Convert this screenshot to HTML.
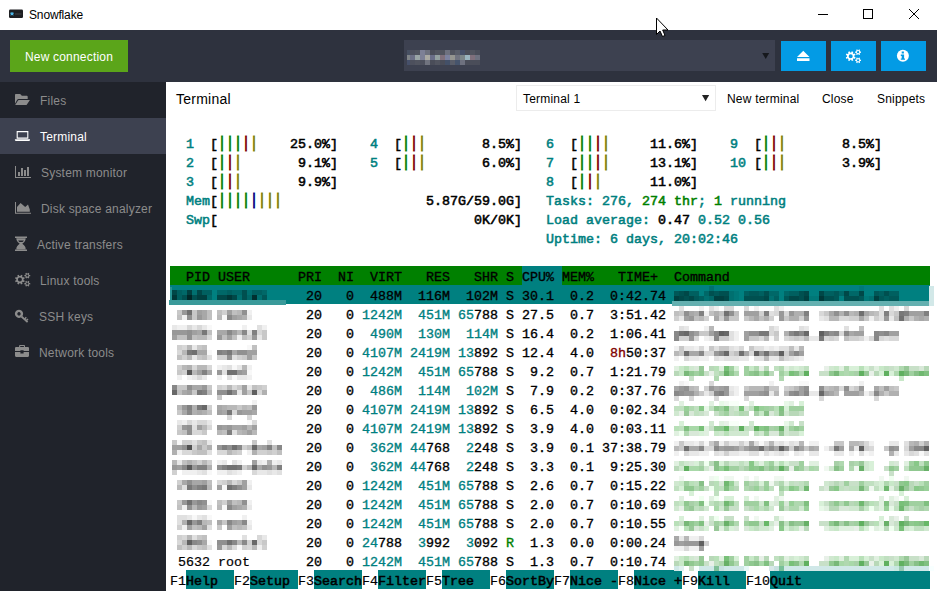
<!DOCTYPE html>
<html><head><meta charset="utf-8"><title>Snowflake</title>
<style>
html,body{margin:0;padding:0;}
body{width:937px;height:591px;overflow:hidden;background:#fff;position:relative;font-family:"Liberation Sans",sans-serif;font-size:12px;color:#000;}
.abs{position:absolute;}
.t{position:absolute;white-space:pre;font:normal 13.33px/19px "Liberation Mono",monospace;-webkit-text-stroke:0.35px currentColor;height:19px;}
.h{-webkit-text-stroke-width:0.55px;}
.l{-webkit-text-stroke-width:0.2px;}
.bar{-webkit-text-stroke-width:0.7px;transform:scaleY(1.18);transform-origin:50% 77%;}
.b{position:absolute;}
#titlebar{position:absolute;left:0;top:0;width:937px;height:30px;background:#fff;}
#toolbar{position:absolute;left:0;top:30px;width:937px;height:52px;background:#2e323e;}
#sidebar{position:absolute;left:0;top:82px;width:166px;height:509px;background:#20232b;}
.item{position:absolute;left:0;width:166px;height:36px;line-height:36px;color:#8c8c8c;font-size:12px;white-space:nowrap;}
.item.sel{background:#3d4150;color:#fff;}
.item svg{position:absolute;}
.item span{position:absolute;top:1px;letter-spacing:0.2px;}
.lbl{position:absolute;white-space:nowrap;}
</style></head><body>
<div id="titlebar">
<svg class="abs" style="left:9px;top:10px" width="14" height="10" viewBox="0 0 14 10" overflow="visible"><rect x="0" y="-0.400" width="14" height="8.400" rx="1.2" fill="#1e1f22"/><path d="M1.200 3.800H4.800M2 2.200L4 5.400M4 2.200L2 5.400" stroke="#4fc3f7" stroke-width="1" fill="none"/><rect x="6" y="3" width="6.500" height="2" fill="#2f3134"/></svg>
<div class="lbl" style="left:29px;top:7px;font-size:12px;line-height:16px;letter-spacing:-0.15px;">Snowflake</div>
<svg class="abs" style="left:810px;top:0" width="127" height="30" viewBox="0 0 127 30" fill="none" stroke="#000" stroke-width="1"><path d="M8 14.5H18"/><rect x="53.5" y="9.5" width="9" height="9"/><path d="M99 9L109 19M109 9L99 19"/></svg>
</div>
<div id="toolbar">
<div class="abs" style="left:10px;top:10px;width:118px;height:32px;background:#5ba51a;color:#fff;font-size:12px;line-height:34px;text-align:center;letter-spacing:0.2px;">New connection</div>
<div class="abs" style="left:404px;top:10px;width:371px;height:31px;background:#3d4150;"></div>
<svg class="abs" style="left:761px;top:22px" width="10" height="8" viewBox="0 0 10 8"><path d="M1.2 1H8.200L4.700 7Z" fill="#16181d"/></svg>
<div class="abs" style="left:781px;top:11px;width:45px;height:30px;background:#039be5;"></div>
<div class="abs" style="left:831px;top:11px;width:45px;height:30px;background:#039be5;"></div>
<div class="abs" style="left:881px;top:11px;width:45px;height:30px;background:#039be5;"></div>
<svg class="abs" style="left:781px;top:11px" width="145" height="30" viewBox="0 0 145 30">
<path fill="#fff" d="M16 16H28.5L22.25 9.8ZM16 17.3H28.5V20H16Z"/>
<path fill="#fff" fill-rule="evenodd" d="M74.58 16.29L73.92 17.88L72.69 17.37L71.87 18.19L72.38 19.42L70.79 20.08L70.28 18.85L69.12 18.85L68.61 20.08L67.02 19.42L67.53 18.19L66.71 17.37L65.48 17.88L64.82 16.29L66.05 15.78L66.05 14.62L64.82 14.11L65.48 12.52L66.71 13.03L67.53 12.21L67.02 10.98L68.61 10.32L69.12 11.55L70.28 11.55L70.79 10.32L72.38 10.98L71.87 12.21L72.69 13.03L73.92 12.52L74.58 14.11L73.35 14.62L73.35 15.78ZM71.70 15.20A2.0 2.0 0 1 0 67.70 15.20A2.0 2.0 0 1 0 71.70 15.20ZM80.02 10.51L80.02 11.89L79.10 11.85L78.66 12.61L79.15 13.39L77.97 14.07L77.54 13.25L76.66 13.25L76.23 14.07L75.05 13.39L75.54 12.61L75.10 11.85L74.18 11.89L74.18 10.51L75.10 10.55L75.54 9.79L75.05 9.01L76.23 8.33L76.66 9.15L77.54 9.15L77.97 8.33L79.15 9.01L78.66 9.79L79.10 10.55ZM78.20 11.20A1.1 1.1 0 1 0 76.00 11.20A1.1 1.1 0 1 0 78.20 11.20ZM80.02 18.61L80.02 19.99L79.10 19.95L78.66 20.71L79.15 21.49L77.97 22.17L77.54 21.35L76.66 21.35L76.23 22.17L75.05 21.49L75.54 20.71L75.10 19.95L74.18 19.99L74.18 18.61L75.10 18.65L75.54 17.89L75.05 17.11L76.23 16.43L76.66 17.25L77.54 17.25L77.97 16.43L79.15 17.11L78.66 17.89L79.10 18.65ZM78.20 19.30A1.1 1.1 0 1 0 76.00 19.30A1.1 1.1 0 1 0 78.20 19.30Z"/>
<circle cx="121.9" cy="14.8" r="6" fill="#fff"/><path fill="#039be5" d="M120.7 10.6h2.2v2h-2.2zM120.2 13.5h2.9v3.9h.9v1.4h-4.2v-1.4h.9v-2.5h-.9v-1.4z"/>
</svg>
</div>
<div class="lbl" style="left:176px;top:90px;font-size:14px;line-height:18px;letter-spacing:0.25px;">Terminal</div>
<div class="abs" style="left:516px;top:85px;width:198px;height:24px;border:1px solid #ececec;box-sizing:content-box;"></div>
<div class="lbl" style="left:523px;top:91px;line-height:16px;letter-spacing:0.2px;">Terminal 1</div>
<svg class="abs" style="left:700px;top:94px" width="10" height="8" viewBox="0 0 10 8"><path d="M2 1H9.200L5.600 7.200Z" fill="#222"/></svg>
<div class="lbl" style="left:727px;top:91px;line-height:16px;letter-spacing:0.2px;">New terminal</div>
<div class="lbl" style="left:822px;top:91px;line-height:16px;letter-spacing:0.2px;">Close</div>
<div class="lbl" style="left:877px;top:91px;line-height:16px;letter-spacing:0.2px;">Snippets</div>

<div id="sidebar">
<div class="item" style="top:0px"><svg style="left:0;top:0" width="36" height="36" viewBox="0 0 36 36" fill="#8c8c8c"><path d="M15 12.800q0-.8.800-.8h4q.6 0 1 .5l1 1.300h5q.9 0 .9.900v2.200H18.600q-.9 0-1.400.800L15 21.700zM18.900 17.900H29.900l-3 4.600q-.3.500-1 .500H15.200l2.800-4.500q.3-.6.900-.6z"/></svg><span style="left:40px">Files</span></div>
<div class="item sel" style="top:36px"><svg style="left:0;top:0" width="36" height="36" viewBox="0 0 36 36" fill="#fff"><path fill="none" stroke="#fff" stroke-width="1.100" d="M17.200 13.600H27.800V20.100H17.200z"/><path d="M14.900 21.200H30v.9q0 .8-.8.800H15.700q-.8 0-.8-.8z"/></svg><span style="left:40px">Terminal</span></div>
<div class="item" style="top:72px"><svg style="left:0;top:0" width="36" height="36" viewBox="0 0 36 36" fill="#8c8c8c"><path d="M15 12h1v11h15v1H15zM18 18h2v4h-2zM21 14h2v8h-2zM24 16h2v6h-2zM27 13h2v9h-2z"/></svg><span style="left:41px">System monitor</span></div>
<div class="item" style="top:108px"><svg style="left:0;top:0" width="36" height="36" viewBox="0 0 36 36" fill="#8c8c8c"><path d="M15 12h1v10.700h15v1H15zM17 21.700V17l3.600-4 4.600 4.100 2.800-2.500 1.800 5v2.100z"/></svg><span style="left:41px">Disk space analyzer</span></div>
<div class="item" style="top:144px"><svg style="left:0;top:0" width="36" height="36" viewBox="0 0 36 36" fill="#8c8c8c"><path fill-rule="evenodd" d="M15 10.600H27V12H15zM15 23.500H27V25H15zM16.300 12.300h9.400q0 3.300-3.400 5.450 3.400 2.150 3.400 5.450H16.300q0-3.300 3.400-5.450Q16.300 15.600 16.300 12.300zM18.100 14.600q.5.800 1.300 1.400h3.200q.8-.6 1.300-1.400z"/></svg><span style="left:37px">Active transfers</span></div>
<div class="item" style="top:180px"><svg style="left:0;top:0" width="36" height="36" viewBox="0 0 36 36" fill="#8c8c8c"><path fill="#8c8c8c" fill-rule="evenodd" d="M24.78 18.69L24.12 20.28L22.89 19.77L22.07 20.59L22.58 21.82L20.99 22.48L20.48 21.25L19.32 21.25L18.81 22.48L17.22 21.82L17.73 20.59L16.91 19.77L15.68 20.28L15.02 18.69L16.25 18.18L16.25 17.02L15.02 16.51L15.68 14.92L16.91 15.43L17.73 14.61L17.22 13.38L18.81 12.72L19.32 13.95L20.48 13.95L20.99 12.72L22.58 13.38L22.07 14.61L22.89 15.43L24.12 14.92L24.78 16.51L23.55 17.02L23.55 18.18ZM21.90 17.60A2.0 2.0 0 1 0 17.90 17.60A2.0 2.0 0 1 0 21.90 17.60ZM30.22 12.91L30.22 14.29L29.30 14.25L28.86 15.01L29.35 15.79L28.17 16.47L27.74 15.65L26.86 15.65L26.43 16.47L25.25 15.79L25.74 15.01L25.30 14.25L24.38 14.29L24.38 12.91L25.30 12.95L25.74 12.19L25.25 11.41L26.43 10.73L26.86 11.55L27.74 11.55L28.17 10.73L29.35 11.41L28.86 12.19L29.30 12.95ZM28.40 13.60A1.1 1.1 0 1 0 26.20 13.60A1.1 1.1 0 1 0 28.40 13.60ZM30.22 21.01L30.22 22.39L29.30 22.35L28.86 23.11L29.35 23.89L28.17 24.57L27.74 23.75L26.86 23.75L26.43 24.57L25.25 23.89L25.74 23.11L25.30 22.35L24.38 22.39L24.38 21.01L25.30 21.05L25.74 20.29L25.25 19.51L26.43 18.83L26.86 19.65L27.74 19.65L28.17 18.83L29.35 19.51L28.86 20.29L29.30 21.05ZM28.40 21.70A1.1 1.1 0 1 0 26.20 21.70A1.1 1.1 0 1 0 28.40 21.70Z"/></svg><span style="left:40px">Linux tools</span></div>
<div class="item" style="top:216px"><svg style="left:0;top:0" width="36" height="36" viewBox="0 0 36 36" fill="#8c8c8c"><path fill-rule="evenodd" d="M19 11.700a4.100 4.100 0 1 0 .01 0zM19 14.100a1.700 1.700 0 1 1-.01 0z"/><path fill="none" stroke="#8c8c8c" stroke-width="1.800" d="M21.500 18.500L27.600 24.200"/><path fill="none" stroke="#8c8c8c" stroke-width="1.400" d="M24.700 20.900L26.300 19.200M26.400 22.600L28 20.900"/></svg><span style="left:39px">SSH keys</span></div>
<div class="item" style="top:252px"><svg style="left:0;top:0" width="36" height="36" viewBox="0 0 36 36" fill="#8c8c8c"><path fill-rule="evenodd" d="M19.100 13v-1.200q0-.9.900-.9h4.100q.9 0 .9.900V13h2.900q1.100 0 1.100 1.100v3H23.600v-.9h-3.200v.9H15v-3q0-1.100 1.100-1.100zM20.200 13h3.700v-1h-3.700zM15 18.100h5.400v1.300h3.200v-1.300H29v3.700q0 1.100-1.100 1.100H16.100q-1.100 0-1.100-1.100z"/></svg><span style="left:39px">Network tools</span></div>
</div>

<div id="term">
<span class="t h" style="left:186px;top:135px;color:#008080;">1</span>
<span class="t h" style="left:210px;top:135px;color:#000;">[</span>
<span class="t bar" style="left:218px;top:135px;color:#008000;">|||</span>
<span class="t bar" style="left:242px;top:135px;color:#800000;">|</span>
<span class="t bar" style="left:250px;top:135px;color:#808000;">|</span>
<span class="t h" style="left:290px;top:135px;color:#000;">25.0%]</span>
<span class="t h" style="left:370px;top:135px;color:#008080;">4</span>
<span class="t h" style="left:394px;top:135px;color:#000;">[</span>
<span class="t bar" style="left:402px;top:135px;color:#008000;">|</span>
<span class="t bar" style="left:410px;top:135px;color:#800000;">|</span>
<span class="t bar" style="left:418px;top:135px;color:#808000;">|</span>
<span class="t h" style="left:482px;top:135px;color:#000;">8.5%]</span>
<span class="t h" style="left:546px;top:135px;color:#008080;">6</span>
<span class="t h" style="left:570px;top:135px;color:#000;">[</span>
<span class="t bar" style="left:578px;top:135px;color:#008000;">||</span>
<span class="t bar" style="left:594px;top:135px;color:#800000;">|</span>
<span class="t bar" style="left:602px;top:135px;color:#808000;">|</span>
<span class="t h" style="left:650px;top:135px;color:#000;">11.6%]</span>
<span class="t h" style="left:730px;top:135px;color:#008080;">9</span>
<span class="t h" style="left:754px;top:135px;color:#000;">[</span>
<span class="t bar" style="left:762px;top:135px;color:#008000;">|</span>
<span class="t bar" style="left:770px;top:135px;color:#800000;">|</span>
<span class="t bar" style="left:778px;top:135px;color:#808000;">|</span>
<span class="t h" style="left:842px;top:135px;color:#000;">8.5%]</span>
<span class="t h" style="left:186px;top:154px;color:#008080;">2</span>
<span class="t h" style="left:210px;top:154px;color:#000;">[</span>
<span class="t bar" style="left:218px;top:154px;color:#008000;">|</span>
<span class="t bar" style="left:226px;top:154px;color:#800000;">|</span>
<span class="t bar" style="left:234px;top:154px;color:#808000;">|</span>
<span class="t h" style="left:298px;top:154px;color:#000;">9.1%]</span>
<span class="t h" style="left:370px;top:154px;color:#008080;">5</span>
<span class="t h" style="left:394px;top:154px;color:#000;">[</span>
<span class="t bar" style="left:402px;top:154px;color:#008000;">|</span>
<span class="t bar" style="left:410px;top:154px;color:#800000;">|</span>
<span class="t bar" style="left:418px;top:154px;color:#808000;">|</span>
<span class="t h" style="left:482px;top:154px;color:#000;">6.0%]</span>
<span class="t h" style="left:546px;top:154px;color:#008080;">7</span>
<span class="t h" style="left:570px;top:154px;color:#000;">[</span>
<span class="t bar" style="left:578px;top:154px;color:#008000;">||</span>
<span class="t bar" style="left:594px;top:154px;color:#800000;">|</span>
<span class="t bar" style="left:602px;top:154px;color:#808000;">|</span>
<span class="t h" style="left:650px;top:154px;color:#000;">13.1%]</span>
<span class="t h" style="left:730px;top:154px;color:#008080;">10</span>
<span class="t h" style="left:754px;top:154px;color:#000;">[</span>
<span class="t bar" style="left:762px;top:154px;color:#008000;">|</span>
<span class="t bar" style="left:770px;top:154px;color:#800000;">|</span>
<span class="t bar" style="left:778px;top:154px;color:#808000;">|</span>
<span class="t h" style="left:842px;top:154px;color:#000;">3.9%]</span>
<span class="t h" style="left:186px;top:173px;color:#008080;">3</span>
<span class="t h" style="left:210px;top:173px;color:#000;">[</span>
<span class="t bar" style="left:218px;top:173px;color:#008000;">|</span>
<span class="t bar" style="left:226px;top:173px;color:#800000;">|</span>
<span class="t bar" style="left:234px;top:173px;color:#808000;">|</span>
<span class="t h" style="left:298px;top:173px;color:#000;">9.9%]</span>
<span class="t h" style="left:546px;top:173px;color:#008080;">8</span>
<span class="t h" style="left:570px;top:173px;color:#000;">[</span>
<span class="t bar" style="left:578px;top:173px;color:#008000;">|</span>
<span class="t bar" style="left:586px;top:173px;color:#800000;">|</span>
<span class="t bar" style="left:594px;top:173px;color:#808000;">|</span>
<span class="t h" style="left:650px;top:173px;color:#000;">11.0%]</span>
<span class="t h" style="left:186px;top:192px;color:#008080;">Mem</span>
<span class="t h" style="left:210px;top:192px;color:#000;">[</span>
<span class="t bar" style="left:218px;top:192px;color:#008000;">||||</span>
<span class="t bar" style="left:250px;top:192px;color:#000080;">|</span>
<span class="t bar" style="left:258px;top:192px;color:#808000;">|||</span>
<span class="t h" style="left:426px;top:192px;color:#000;">5.87G/59.0G]</span>
<span class="t h" style="left:186px;top:211px;color:#008080;">Swp</span>
<span class="t h" style="left:210px;top:211px;color:#000;">[</span>
<span class="t h" style="left:474px;top:211px;color:#000;">0K/0K]</span>
<span class="t h" style="left:546px;top:192px;color:#008080;">Tasks: 276, </span>
<span class="t h" style="left:642px;top:192px;color:#008000;">274 thr</span>
<span class="t h" style="left:698px;top:192px;color:#008080;">; </span>
<span class="t h" style="left:714px;top:192px;color:#008000;">1</span>
<span class="t h" style="left:722px;top:192px;color:#008080;"> running</span>
<span class="t h" style="left:546px;top:211px;color:#008080;">Load average: </span>
<span class="t h" style="left:658px;top:211px;color:#000;">0.47</span>
<span class="t h" style="left:698px;top:211px;color:#008080;">0.52 0.56</span>
<span class="t h" style="left:546px;top:230px;color:#008080;">Uptime: 6 days, 20:02:46</span>
<div class="b" style="left:170px;top:266px;width:760px;height:19px;background:#008000"></div>
<div class="b" style="left:522px;top:266px;width:40px;height:19px;background:#008080"></div>
<span class="t" style="left:170px;top:268px;color:#000;">  PID USER      PRI  NI  VIRT   RES   SHR S CPU% MEM%   TIME+  Command</span>
<div class="b" style="left:170px;top:285px;width:760px;height:19px;background:#008080"></div>
<span class="t" style="left:306px;top:287px;color:#000;">20</span>
<span class="t" style="left:346px;top:287px;color:#000;">0</span>
<span class="t" style="left:362px;top:287px;color:#000;"> 488M</span>
<span class="t" style="left:410px;top:287px;color:#000;"> 116M</span>
<span class="t" style="left:458px;top:287px;color:#000;"> 102M</span>
<span class="t" style="left:506px;top:287px;color:#000;">S</span>
<span class="t" style="left:522px;top:287px;color:#000;">30.1</span>
<span class="t" style="left:562px;top:287px;color:#000;"> 0.2</span>
<span class="t" style="left:602px;top:287px;color:#000;"> 0:42.74</span>
<span class="t" style="left:306px;top:306px;color:#000;">20</span>
<span class="t" style="left:346px;top:306px;color:#000;">0</span>
<span class="t" style="left:362px;top:306px;color:#008080;">1242M</span>
<span class="t" style="left:418px;top:306px;color:#008080;">451M</span>
<span class="t" style="left:458px;top:306px;color:#008080;">65</span>
<span class="t" style="left:474px;top:306px;color:#000;">788</span>
<span class="t" style="left:506px;top:306px;color:#000;">S</span>
<span class="t" style="left:522px;top:306px;color:#000;">27.5</span>
<span class="t" style="left:562px;top:306px;color:#000;"> 0.7</span>
<span class="t" style="left:602px;top:306px;color:#000;"> 3:51.42</span>
<span class="t" style="left:306px;top:325px;color:#000;">20</span>
<span class="t" style="left:346px;top:325px;color:#000;">0</span>
<span class="t" style="left:370px;top:325px;color:#008080;">490M</span>
<span class="t" style="left:418px;top:325px;color:#008080;">130M</span>
<span class="t" style="left:466px;top:325px;color:#008080;">114M</span>
<span class="t" style="left:506px;top:325px;color:#000;">S</span>
<span class="t" style="left:522px;top:325px;color:#000;">16.4</span>
<span class="t" style="left:562px;top:325px;color:#000;"> 0.2</span>
<span class="t" style="left:602px;top:325px;color:#000;"> 1:06.41</span>
<span class="t" style="left:306px;top:344px;color:#000;">20</span>
<span class="t" style="left:346px;top:344px;color:#000;">0</span>
<span class="t" style="left:362px;top:344px;color:#008080;">4107M</span>
<span class="t" style="left:410px;top:344px;color:#008080;">2419M</span>
<span class="t" style="left:458px;top:344px;color:#008080;">13</span>
<span class="t" style="left:474px;top:344px;color:#000;">892</span>
<span class="t" style="left:506px;top:344px;color:#000;">S</span>
<span class="t" style="left:522px;top:344px;color:#000;">12.4</span>
<span class="t" style="left:562px;top:344px;color:#000;"> 4.0</span>
<span class="t" style="left:610px;top:344px;color:#800000;">8h</span>
<span class="t" style="left:626px;top:344px;color:#000;">50:37</span>
<span class="t" style="left:306px;top:363px;color:#000;">20</span>
<span class="t" style="left:346px;top:363px;color:#000;">0</span>
<span class="t" style="left:362px;top:363px;color:#008080;">1242M</span>
<span class="t" style="left:418px;top:363px;color:#008080;">451M</span>
<span class="t" style="left:458px;top:363px;color:#008080;">65</span>
<span class="t" style="left:474px;top:363px;color:#000;">788</span>
<span class="t" style="left:506px;top:363px;color:#000;">S</span>
<span class="t" style="left:522px;top:363px;color:#000;"> 9.2</span>
<span class="t" style="left:562px;top:363px;color:#000;"> 0.7</span>
<span class="t" style="left:602px;top:363px;color:#000;"> 1:21.79</span>
<span class="t" style="left:306px;top:382px;color:#000;">20</span>
<span class="t" style="left:346px;top:382px;color:#000;">0</span>
<span class="t" style="left:370px;top:382px;color:#008080;">486M</span>
<span class="t" style="left:418px;top:382px;color:#008080;">114M</span>
<span class="t" style="left:466px;top:382px;color:#008080;">102M</span>
<span class="t" style="left:506px;top:382px;color:#000;">S</span>
<span class="t" style="left:522px;top:382px;color:#000;"> 7.9</span>
<span class="t" style="left:562px;top:382px;color:#000;"> 0.2</span>
<span class="t" style="left:602px;top:382px;color:#000;"> 0:37.76</span>
<span class="t" style="left:306px;top:401px;color:#000;">20</span>
<span class="t" style="left:346px;top:401px;color:#000;">0</span>
<span class="t" style="left:362px;top:401px;color:#008080;">4107M</span>
<span class="t" style="left:410px;top:401px;color:#008080;">2419M</span>
<span class="t" style="left:458px;top:401px;color:#008080;">13</span>
<span class="t" style="left:474px;top:401px;color:#000;">892</span>
<span class="t" style="left:506px;top:401px;color:#000;">S</span>
<span class="t" style="left:522px;top:401px;color:#000;"> 6.5</span>
<span class="t" style="left:562px;top:401px;color:#000;"> 4.0</span>
<span class="t" style="left:602px;top:401px;color:#000;"> 0:02.34</span>
<span class="t" style="left:306px;top:420px;color:#000;">20</span>
<span class="t" style="left:346px;top:420px;color:#000;">0</span>
<span class="t" style="left:362px;top:420px;color:#008080;">4107M</span>
<span class="t" style="left:410px;top:420px;color:#008080;">2419M</span>
<span class="t" style="left:458px;top:420px;color:#008080;">13</span>
<span class="t" style="left:474px;top:420px;color:#000;">892</span>
<span class="t" style="left:506px;top:420px;color:#000;">S</span>
<span class="t" style="left:522px;top:420px;color:#000;"> 3.9</span>
<span class="t" style="left:562px;top:420px;color:#000;"> 4.0</span>
<span class="t" style="left:602px;top:420px;color:#000;"> 0:03.11</span>
<span class="t" style="left:306px;top:439px;color:#000;">20</span>
<span class="t" style="left:346px;top:439px;color:#000;">0</span>
<span class="t" style="left:370px;top:439px;color:#008080;">362M</span>
<span class="t" style="left:410px;top:439px;color:#008080;">44</span>
<span class="t" style="left:426px;top:439px;color:#000;">768</span>
<span class="t" style="left:466px;top:439px;color:#008080;">2</span>
<span class="t" style="left:474px;top:439px;color:#000;">248</span>
<span class="t" style="left:506px;top:439px;color:#000;">S</span>
<span class="t" style="left:522px;top:439px;color:#000;"> 3.9</span>
<span class="t" style="left:562px;top:439px;color:#000;"> 0.1</span>
<span class="t" style="left:602px;top:439px;color:#000;">37:38.79</span>
<span class="t" style="left:306px;top:458px;color:#000;">20</span>
<span class="t" style="left:346px;top:458px;color:#000;">0</span>
<span class="t" style="left:370px;top:458px;color:#008080;">362M</span>
<span class="t" style="left:410px;top:458px;color:#008080;">44</span>
<span class="t" style="left:426px;top:458px;color:#000;">768</span>
<span class="t" style="left:466px;top:458px;color:#008080;">2</span>
<span class="t" style="left:474px;top:458px;color:#000;">248</span>
<span class="t" style="left:506px;top:458px;color:#000;">S</span>
<span class="t" style="left:522px;top:458px;color:#000;"> 3.3</span>
<span class="t" style="left:562px;top:458px;color:#000;"> 0.1</span>
<span class="t" style="left:602px;top:458px;color:#000;"> 9:25.30</span>
<span class="t" style="left:306px;top:477px;color:#000;">20</span>
<span class="t" style="left:346px;top:477px;color:#000;">0</span>
<span class="t" style="left:362px;top:477px;color:#008080;">1242M</span>
<span class="t" style="left:418px;top:477px;color:#008080;">451M</span>
<span class="t" style="left:458px;top:477px;color:#008080;">65</span>
<span class="t" style="left:474px;top:477px;color:#000;">788</span>
<span class="t" style="left:506px;top:477px;color:#000;">S</span>
<span class="t" style="left:522px;top:477px;color:#000;"> 2.6</span>
<span class="t" style="left:562px;top:477px;color:#000;"> 0.7</span>
<span class="t" style="left:602px;top:477px;color:#000;"> 0:15.22</span>
<span class="t" style="left:306px;top:496px;color:#000;">20</span>
<span class="t" style="left:346px;top:496px;color:#000;">0</span>
<span class="t" style="left:362px;top:496px;color:#008080;">1242M</span>
<span class="t" style="left:418px;top:496px;color:#008080;">451M</span>
<span class="t" style="left:458px;top:496px;color:#008080;">65</span>
<span class="t" style="left:474px;top:496px;color:#000;">788</span>
<span class="t" style="left:506px;top:496px;color:#000;">S</span>
<span class="t" style="left:522px;top:496px;color:#000;"> 2.0</span>
<span class="t" style="left:562px;top:496px;color:#000;"> 0.7</span>
<span class="t" style="left:602px;top:496px;color:#000;"> 0:10.69</span>
<span class="t" style="left:306px;top:515px;color:#000;">20</span>
<span class="t" style="left:346px;top:515px;color:#000;">0</span>
<span class="t" style="left:362px;top:515px;color:#008080;">1242M</span>
<span class="t" style="left:418px;top:515px;color:#008080;">451M</span>
<span class="t" style="left:458px;top:515px;color:#008080;">65</span>
<span class="t" style="left:474px;top:515px;color:#000;">788</span>
<span class="t" style="left:506px;top:515px;color:#000;">S</span>
<span class="t" style="left:522px;top:515px;color:#000;"> 2.0</span>
<span class="t" style="left:562px;top:515px;color:#000;"> 0.7</span>
<span class="t" style="left:602px;top:515px;color:#000;"> 0:10.55</span>
<span class="t" style="left:306px;top:534px;color:#000;">20</span>
<span class="t" style="left:346px;top:534px;color:#000;">0</span>
<span class="t" style="left:362px;top:534px;color:#008080;">24</span>
<span class="t" style="left:378px;top:534px;color:#000;">788</span>
<span class="t" style="left:418px;top:534px;color:#008080;">3</span>
<span class="t" style="left:426px;top:534px;color:#000;">992</span>
<span class="t" style="left:466px;top:534px;color:#008080;">3</span>
<span class="t" style="left:474px;top:534px;color:#000;">092</span>
<span class="t" style="left:506px;top:534px;color:#008000;">R</span>
<span class="t" style="left:522px;top:534px;color:#000;"> 1.3</span>
<span class="t" style="left:562px;top:534px;color:#000;"> 0.0</span>
<span class="t" style="left:602px;top:534px;color:#000;"> 0:00.24</span>
<span class="t" style="left:306px;top:553px;color:#000;">20</span>
<span class="t" style="left:346px;top:553px;color:#000;">0</span>
<span class="t" style="left:362px;top:553px;color:#008080;">1242M</span>
<span class="t" style="left:418px;top:553px;color:#008080;">451M</span>
<span class="t" style="left:458px;top:553px;color:#008080;">65</span>
<span class="t" style="left:474px;top:553px;color:#000;">788</span>
<span class="t" style="left:506px;top:553px;color:#000;">S</span>
<span class="t" style="left:522px;top:553px;color:#000;"> 1.3</span>
<span class="t" style="left:562px;top:553px;color:#000;"> 0.7</span>
<span class="t" style="left:602px;top:553px;color:#000;"> 0:10.74</span>
<span class="t l" style="left:178px;top:553px;color:#000;">5632 root</span>
<span class="t l" style="left:170px;top:572px;color:#000;">F1</span>
<div class="b" style="left:186px;top:570px;width:48px;height:19px;background:#008080"></div>
<span class="t h" style="left:186px;top:572px;color:#000;">Help  </span>
<span class="t l" style="left:234px;top:572px;color:#000;">F2</span>
<div class="b" style="left:250px;top:570px;width:48px;height:19px;background:#008080"></div>
<span class="t h" style="left:250px;top:572px;color:#000;">Setup </span>
<span class="t l" style="left:298px;top:572px;color:#000;">F3</span>
<div class="b" style="left:314px;top:570px;width:48px;height:19px;background:#008080"></div>
<span class="t h" style="left:314px;top:572px;color:#000;">Search</span>
<span class="t l" style="left:362px;top:572px;color:#000;">F4</span>
<div class="b" style="left:378px;top:570px;width:48px;height:19px;background:#008080"></div>
<span class="t h" style="left:378px;top:572px;color:#000;">Filter</span>
<span class="t l" style="left:426px;top:572px;color:#000;">F5</span>
<div class="b" style="left:442px;top:570px;width:48px;height:19px;background:#008080"></div>
<span class="t h" style="left:442px;top:572px;color:#000;">Tree  </span>
<span class="t l" style="left:490px;top:572px;color:#000;">F6</span>
<div class="b" style="left:506px;top:570px;width:48px;height:19px;background:#008080"></div>
<span class="t h" style="left:506px;top:572px;color:#000;">SortBy</span>
<span class="t l" style="left:554px;top:572px;color:#000;">F7</span>
<div class="b" style="left:570px;top:570px;width:48px;height:19px;background:#008080"></div>
<span class="t h" style="left:570px;top:572px;color:#000;">Nice -</span>
<span class="t l" style="left:618px;top:572px;color:#000;">F8</span>
<div class="b" style="left:634px;top:570px;width:48px;height:19px;background:#008080"></div>
<span class="t h" style="left:634px;top:572px;color:#000;">Nice +</span>
<span class="t l" style="left:682px;top:572px;color:#000;">F9</span>
<div class="b" style="left:698px;top:570px;width:48px;height:19px;background:#008080"></div>
<span class="t h" style="left:698px;top:572px;color:#000;">Kill  </span>
<span class="t l" style="left:746px;top:572px;color:#000;">F10</span>
<div class="b" style="left:770px;top:570px;width:160px;height:19px;background:#008080"></div>
<span class="t h" style="left:770px;top:572px;color:#000;">Quit</span>
<svg class="abs" style="left:0;top:0" width="937" height="591" viewBox="0 0 937 591" shape-rendering="crispEdges">
<path fill="#004848" d="M172 290h5v5h-5zM197 290h5v5h-5zM217 295h5v5h-5zM222 295h5v5h-5zM232 295h5v5h-5zM684 291h5v5h-5zM804 291h5v5h-5zM819 291h5v5h-5zM844 291h5v5h-5zM859 291h5v5h-5zM679 296h5v5h-5zM689 296h5v5h-5zM724 296h5v5h-5zM764 296h5v5h-5zM789 296h5v5h-5zM794 296h5v5h-5z"/>
<path fill="#006060" d="M177 290h5v5h-5zM202 290h5v5h-5zM207 290h5v5h-5zM227 290h5v5h-5zM252 290h5v5h-5zM257 290h5v5h-5zM177 295h5v5h-5zM689 291h5v5h-5zM694 291h5v5h-5zM744 291h5v5h-5zM759 291h5v5h-5zM789 291h5v5h-5zM794 291h5v5h-5zM824 291h5v5h-5zM829 291h5v5h-5zM879 291h5v5h-5zM889 291h5v5h-5zM894 291h5v5h-5zM699 296h5v5h-5zM774 296h5v5h-5zM884 296h5v5h-5z"/>
<path fill="#006868" d="M182 290h5v5h-5zM217 290h5v5h-5zM222 290h5v5h-5zM232 290h5v5h-5zM237 290h5v5h-5zM262 290h5v5h-5zM207 295h5v5h-5zM247 295h5v5h-5zM704 291h5v5h-5zM769 291h5v5h-5zM774 291h5v5h-5zM784 291h5v5h-5zM839 291h5v5h-5zM849 291h5v5h-5zM854 291h5v5h-5zM709 296h5v5h-5z"/>
<path fill="#004040" d="M187 290h5v5h-5zM197 295h5v5h-5zM202 295h5v5h-5zM674 296h5v5h-5zM714 296h5v5h-5zM719 296h5v5h-5zM804 296h5v5h-5zM874 296h5v5h-5z"/>
<path fill="#007070" d="M192 290h5v5h-5zM247 290h5v5h-5zM237 295h5v5h-5zM257 295h5v5h-5zM709 286h5v5h-5zM729 291h5v5h-5zM704 296h5v5h-5zM729 296h5v5h-5zM769 296h5v5h-5zM869 296h5v5h-5z"/>
<path fill="#005050" d="M242 290h5v5h-5zM182 295h5v5h-5zM192 295h5v5h-5zM242 295h5v5h-5zM679 291h5v5h-5zM709 291h5v5h-5zM719 291h5v5h-5zM724 291h5v5h-5zM764 291h5v5h-5zM799 291h5v5h-5zM884 291h5v5h-5zM684 296h5v5h-5zM744 296h5v5h-5zM749 296h5v5h-5zM754 296h5v5h-5zM759 296h5v5h-5zM799 296h5v5h-5zM824 296h5v5h-5zM829 296h5v5h-5zM844 296h5v5h-5zM849 296h5v5h-5zM854 296h5v5h-5z"/>
<path fill="#003838" d="M172 295h5v5h-5zM227 295h5v5h-5zM819 296h5v5h-5z"/>
<path fill="#002828" d="M187 295h5v5h-5z"/>
<path fill="#003030" d="M252 295h5v5h-5z"/>
<path fill="#005858" d="M262 295h5v5h-5zM674 291h5v5h-5zM714 291h5v5h-5zM749 291h5v5h-5zM754 291h5v5h-5zM834 291h5v5h-5zM874 291h5v5h-5zM694 296h5v5h-5zM784 296h5v5h-5zM834 296h5v5h-5zM859 296h5v5h-5zM879 296h5v5h-5zM889 296h5v5h-5zM894 296h5v5h-5z"/>
<path fill="#c8c8c8" d="M177 310h5v5h-5zM192 310h5v5h-5zM192 315h5v5h-5zM262 330h5v5h-5zM262 335h5v5h-5zM197 345h5v5h-5zM197 355h5v5h-5zM242 355h5v5h-5zM252 355h5v5h-5zM177 370h5v5h-5zM177 385h5v5h-5zM182 385h5v5h-5zM207 385h5v5h-5zM237 385h5v5h-5zM257 385h5v5h-5zM192 390h5v5h-5zM247 390h5v5h-5zM217 395h5v5h-5zM237 405h5v5h-5zM177 410h5v5h-5zM177 430h5v5h-5zM202 430h5v5h-5zM172 440h5v5h-5zM197 440h5v5h-5zM252 440h5v5h-5zM202 445h5v5h-5zM192 450h5v5h-5zM232 450h5v5h-5zM267 450h5v5h-5zM237 480h5v5h-5zM177 500h5v5h-5zM222 520h5v5h-5zM217 525h5v5h-5zM197 535h5v5h-5zM262 540h5v5h-5zM197 545h5v5h-5zM679 311h5v5h-5zM824 311h5v5h-5zM894 311h5v5h-5zM729 316h5v5h-5zM734 316h5v5h-5zM744 316h5v5h-5zM784 316h5v5h-5zM864 316h5v5h-5zM909 316h5v5h-5zM699 331h5v5h-5zM704 331h5v5h-5zM774 331h5v5h-5zM719 336h5v5h-5zM724 336h5v5h-5zM749 336h5v5h-5zM754 336h5v5h-5zM794 336h5v5h-5zM679 346h5v5h-5zM709 346h5v5h-5zM719 346h5v5h-5zM724 346h5v5h-5zM749 346h5v5h-5zM679 351h5v5h-5zM744 386h5v5h-5zM769 386h5v5h-5zM774 386h5v5h-5zM789 386h5v5h-5zM854 386h5v5h-5zM894 386h5v5h-5zM699 391h5v5h-5zM884 391h5v5h-5zM679 441h5v5h-5zM709 441h5v5h-5zM834 441h5v5h-5zM839 441h5v5h-5zM679 446h5v5h-5zM804 446h5v5h-5zM884 446h5v5h-5z"/>
<path fill="#989898" d="M182 310h5v5h-5zM197 315h5v5h-5zM172 330h5v5h-5zM177 330h5v5h-5zM182 330h5v5h-5zM217 335h5v5h-5zM252 335h5v5h-5zM217 370h5v5h-5zM237 370h5v5h-5zM202 385h5v5h-5zM182 405h5v5h-5zM252 405h5v5h-5zM237 410h5v5h-5zM182 425h5v5h-5zM217 425h5v5h-5zM227 425h5v5h-5zM217 445h5v5h-5zM172 465h5v5h-5zM192 465h5v5h-5zM267 465h5v5h-5zM182 500h5v5h-5zM192 500h5v5h-5zM197 505h5v5h-5zM192 520h5v5h-5zM217 545h5v5h-5zM779 311h5v5h-5zM789 311h5v5h-5zM689 316h5v5h-5zM724 316h5v5h-5zM779 316h5v5h-5zM804 316h5v5h-5zM884 316h5v5h-5zM689 336h5v5h-5zM714 351h5v5h-5zM759 351h5v5h-5zM679 386h5v5h-5zM709 386h5v5h-5zM724 386h5v5h-5zM859 386h5v5h-5zM684 391h5v5h-5zM689 391h5v5h-5zM724 391h5v5h-5zM759 391h5v5h-5zM724 446h5v5h-5zM729 446h5v5h-5zM894 446h5v5h-5zM674 541h5v5h-5zM684 541h5v5h-5zM689 541h5v5h-5zM694 541h5v5h-5z"/>
<path fill="#707070" d="M187 310h5v5h-5zM192 350h5v5h-5zM227 370h5v5h-5zM232 370h5v5h-5zM227 390h5v5h-5zM232 445h5v5h-5zM227 465h5v5h-5zM232 465h5v5h-5zM227 485h5v5h-5zM187 500h5v5h-5zM227 540h5v5h-5zM724 311h5v5h-5zM859 311h5v5h-5zM899 316h5v5h-5zM679 331h5v5h-5zM684 351h5v5h-5zM739 351h5v5h-5zM764 351h5v5h-5zM684 446h5v5h-5zM759 446h5v5h-5z"/>
<path fill="#a0a0a0" d="M197 310h5v5h-5zM227 310h5v5h-5zM232 315h5v5h-5zM192 330h5v5h-5zM232 330h5v5h-5zM172 335h5v5h-5zM227 335h5v5h-5zM247 350h5v5h-5zM252 350h5v5h-5zM247 355h5v5h-5zM197 370h5v5h-5zM242 370h5v5h-5zM242 385h5v5h-5zM187 390h5v5h-5zM242 390h5v5h-5zM217 410h5v5h-5zM242 410h5v5h-5zM247 410h5v5h-5zM197 425h5v5h-5zM222 425h5v5h-5zM242 425h5v5h-5zM252 425h5v5h-5zM247 430h5v5h-5zM172 445h5v5h-5zM177 445h5v5h-5zM262 445h5v5h-5zM252 460h5v5h-5zM177 465h5v5h-5zM202 480h5v5h-5zM242 480h5v5h-5zM217 485h5v5h-5zM242 485h5v5h-5zM227 500h5v5h-5zM202 505h5v5h-5zM232 505h5v5h-5zM232 520h5v5h-5zM187 525h5v5h-5zM202 525h5v5h-5zM227 525h5v5h-5zM744 311h5v5h-5zM749 311h5v5h-5zM754 311h5v5h-5zM909 311h5v5h-5zM914 311h5v5h-5zM919 311h5v5h-5zM684 316h5v5h-5zM694 331h5v5h-5zM709 331h5v5h-5zM744 331h5v5h-5zM854 331h5v5h-5zM859 331h5v5h-5zM889 331h5v5h-5zM894 331h5v5h-5zM744 336h5v5h-5zM774 351h5v5h-5zM789 351h5v5h-5zM799 351h5v5h-5zM719 386h5v5h-5zM764 386h5v5h-5zM799 386h5v5h-5zM884 386h5v5h-5zM744 391h5v5h-5zM749 391h5v5h-5zM754 391h5v5h-5zM799 391h5v5h-5zM824 391h5v5h-5zM844 391h5v5h-5zM849 391h5v5h-5zM854 391h5v5h-5zM719 446h5v5h-5zM734 446h5v5h-5zM744 446h5v5h-5zM799 446h5v5h-5zM839 446h5v5h-5zM909 446h5v5h-5zM679 541h5v5h-5zM699 546h5v5h-5z"/>
<path fill="#a8a8a8" d="M202 310h5v5h-5zM202 315h5v5h-5zM237 315h5v5h-5zM197 330h5v5h-5zM217 330h5v5h-5zM222 330h5v5h-5zM197 350h5v5h-5zM202 350h5v5h-5zM232 350h5v5h-5zM207 370h5v5h-5zM192 385h5v5h-5zM197 385h5v5h-5zM182 390h5v5h-5zM217 405h5v5h-5zM182 410h5v5h-5zM197 410h5v5h-5zM222 410h5v5h-5zM252 410h5v5h-5zM232 425h5v5h-5zM237 425h5v5h-5zM197 445h5v5h-5zM257 445h5v5h-5zM257 465h5v5h-5zM182 480h5v5h-5zM192 480h5v5h-5zM197 480h5v5h-5zM237 505h5v5h-5zM217 520h5v5h-5zM237 520h5v5h-5zM202 540h5v5h-5zM689 311h5v5h-5zM829 311h5v5h-5zM864 311h5v5h-5zM714 316h5v5h-5zM754 316h5v5h-5zM859 316h5v5h-5zM919 316h5v5h-5zM849 331h5v5h-5zM689 351h5v5h-5zM694 351h5v5h-5zM744 351h5v5h-5zM769 351h5v5h-5zM674 386h5v5h-5zM714 386h5v5h-5zM874 386h5v5h-5zM829 391h5v5h-5zM714 441h5v5h-5zM749 441h5v5h-5zM689 446h5v5h-5zM694 446h5v5h-5zM764 446h5v5h-5zM774 446h5v5h-5zM809 446h5v5h-5zM849 446h5v5h-5zM674 536h5v5h-5z"/>
<path fill="#c0c0c0" d="M207 310h5v5h-5zM217 310h5v5h-5zM232 310h5v5h-5zM177 315h5v5h-5zM207 315h5v5h-5zM207 330h5v5h-5zM177 335h5v5h-5zM182 335h5v5h-5zM192 335h5v5h-5zM222 335h5v5h-5zM232 335h5v5h-5zM242 335h5v5h-5zM202 345h5v5h-5zM252 345h5v5h-5zM177 355h5v5h-5zM202 355h5v5h-5zM252 385h5v5h-5zM177 390h5v5h-5zM247 405h5v5h-5zM207 410h5v5h-5zM182 430h5v5h-5zM222 430h5v5h-5zM202 440h5v5h-5zM247 445h5v5h-5zM272 445h5v5h-5zM197 450h5v5h-5zM202 450h5v5h-5zM277 450h5v5h-5zM182 460h5v5h-5zM192 460h5v5h-5zM207 480h5v5h-5zM217 500h5v5h-5zM232 500h5v5h-5zM177 505h5v5h-5zM207 520h5v5h-5zM192 525h5v5h-5zM232 525h5v5h-5zM242 525h5v5h-5zM202 535h5v5h-5zM177 545h5v5h-5zM202 545h5v5h-5zM674 311h5v5h-5zM709 311h5v5h-5zM719 311h5v5h-5zM734 311h5v5h-5zM874 311h5v5h-5zM694 316h5v5h-5zM759 316h5v5h-5zM894 316h5v5h-5zM859 326h5v5h-5zM844 336h5v5h-5zM789 346h5v5h-5zM734 351h5v5h-5zM779 356h5v5h-5zM694 386h5v5h-5zM824 386h5v5h-5zM879 386h5v5h-5zM889 386h5v5h-5zM859 441h5v5h-5z"/>
<path fill="#d0d0d0" d="M222 310h5v5h-5zM247 335h5v5h-5zM177 345h5v5h-5zM182 355h5v5h-5zM217 355h5v5h-5zM222 355h5v5h-5zM237 355h5v5h-5zM177 365h5v5h-5zM182 370h5v5h-5zM217 385h5v5h-5zM262 385h5v5h-5zM207 405h5v5h-5zM177 425h5v5h-5zM182 440h5v5h-5zM187 440h5v5h-5zM192 445h5v5h-5zM242 445h5v5h-5zM237 450h5v5h-5zM257 450h5v5h-5zM262 450h5v5h-5zM272 450h5v5h-5zM197 460h5v5h-5zM207 460h5v5h-5zM242 465h5v5h-5zM172 470h5v5h-5zM177 480h5v5h-5zM222 480h5v5h-5zM222 500h5v5h-5zM177 525h5v5h-5zM177 535h5v5h-5zM247 540h5v5h-5zM182 545h5v5h-5zM242 545h5v5h-5zM262 545h5v5h-5zM759 311h5v5h-5zM674 316h5v5h-5zM704 316h5v5h-5zM719 316h5v5h-5zM769 316h5v5h-5zM799 316h5v5h-5zM849 316h5v5h-5zM854 316h5v5h-5zM874 316h5v5h-5zM679 336h5v5h-5zM684 336h5v5h-5zM774 336h5v5h-5zM789 336h5v5h-5zM799 336h5v5h-5zM829 336h5v5h-5zM849 336h5v5h-5zM854 336h5v5h-5zM729 351h5v5h-5zM784 351h5v5h-5zM704 386h5v5h-5zM784 386h5v5h-5zM709 391h5v5h-5zM724 441h5v5h-5zM739 441h5v5h-5zM919 441h5v5h-5zM789 446h5v5h-5zM829 446h5v5h-5zM864 446h5v5h-5zM724 451h5v5h-5zM704 541h5v5h-5z"/>
<path fill="#b8b8b8" d="M237 310h5v5h-5zM217 315h5v5h-5zM237 330h5v5h-5zM197 335h5v5h-5zM202 335h5v5h-5zM187 345h5v5h-5zM182 350h5v5h-5zM187 355h5v5h-5zM182 365h5v5h-5zM197 365h5v5h-5zM202 365h5v5h-5zM242 365h5v5h-5zM192 370h5v5h-5zM227 385h5v5h-5zM207 390h5v5h-5zM177 405h5v5h-5zM227 405h5v5h-5zM232 405h5v5h-5zM242 405h5v5h-5zM202 425h5v5h-5zM247 425h5v5h-5zM217 430h5v5h-5zM237 430h5v5h-5zM252 430h5v5h-5zM227 450h5v5h-5zM172 460h5v5h-5zM202 460h5v5h-5zM247 465h5v5h-5zM272 465h5v5h-5zM227 480h5v5h-5zM177 485h5v5h-5zM207 485h5v5h-5zM237 500h5v5h-5zM192 505h5v5h-5zM217 505h5v5h-5zM202 520h5v5h-5zM197 525h5v5h-5zM237 525h5v5h-5zM187 535h5v5h-5zM182 540h5v5h-5zM237 540h5v5h-5zM187 545h5v5h-5zM227 545h5v5h-5zM252 545h5v5h-5zM849 311h5v5h-5zM869 311h5v5h-5zM699 316h5v5h-5zM749 316h5v5h-5zM829 316h5v5h-5zM834 316h5v5h-5zM709 326h5v5h-5zM764 336h5v5h-5zM804 336h5v5h-5zM799 346h5v5h-5zM674 351h5v5h-5zM764 356h5v5h-5zM689 386h5v5h-5zM749 386h5v5h-5zM754 386h5v5h-5zM759 386h5v5h-5zM794 386h5v5h-5zM829 386h5v5h-5zM774 391h5v5h-5zM784 391h5v5h-5zM834 391h5v5h-5zM769 441h5v5h-5zM799 441h5v5h-5zM849 441h5v5h-5zM854 441h5v5h-5zM909 441h5v5h-5zM674 446h5v5h-5zM739 446h5v5h-5zM684 536h5v5h-5z"/>
<path fill="#909090" d="M242 310h5v5h-5zM187 315h5v5h-5zM187 330h5v5h-5zM187 335h5v5h-5zM237 350h5v5h-5zM242 350h5v5h-5zM227 355h5v5h-5zM187 385h5v5h-5zM217 390h5v5h-5zM222 390h5v5h-5zM232 390h5v5h-5zM187 425h5v5h-5zM187 430h5v5h-5zM182 445h5v5h-5zM227 445h5v5h-5zM217 465h5v5h-5zM262 465h5v5h-5zM187 480h5v5h-5zM192 485h5v5h-5zM237 485h5v5h-5zM202 500h5v5h-5zM242 500h5v5h-5zM187 505h5v5h-5zM197 540h5v5h-5zM217 540h5v5h-5zM222 540h5v5h-5zM684 311h5v5h-5zM729 311h5v5h-5zM834 311h5v5h-5zM844 311h5v5h-5zM689 331h5v5h-5zM749 331h5v5h-5zM754 331h5v5h-5zM829 331h5v5h-5zM879 331h5v5h-5zM684 386h5v5h-5zM804 386h5v5h-5zM819 386h5v5h-5zM844 386h5v5h-5zM679 391h5v5h-5zM764 391h5v5h-5zM789 391h5v5h-5zM749 446h5v5h-5zM754 446h5v5h-5zM769 446h5v5h-5zM784 446h5v5h-5zM889 446h5v5h-5z"/>
<path fill="#f0f0f0" d="M247 310h5v5h-5zM182 315h5v5h-5zM177 325h5v5h-5zM182 325h5v5h-5zM242 325h5v5h-5zM262 325h5v5h-5zM237 335h5v5h-5zM217 365h5v5h-5zM247 365h5v5h-5zM177 375h5v5h-5zM187 375h5v5h-5zM217 375h5v5h-5zM247 375h5v5h-5zM252 400h5v5h-5zM182 420h5v5h-5zM177 450h5v5h-5zM247 450h5v5h-5zM217 460h5v5h-5zM237 460h5v5h-5zM262 460h5v5h-5zM272 460h5v5h-5zM182 470h5v5h-5zM187 470h5v5h-5zM192 470h5v5h-5zM217 470h5v5h-5zM222 470h5v5h-5zM237 470h5v5h-5zM247 480h5v5h-5zM247 500h5v5h-5zM182 505h5v5h-5zM242 515h5v5h-5zM247 520h5v5h-5zM182 525h5v5h-5zM257 545h5v5h-5zM699 306h5v5h-5zM714 306h5v5h-5zM754 306h5v5h-5zM779 306h5v5h-5zM894 306h5v5h-5zM704 311h5v5h-5zM869 316h5v5h-5zM704 326h5v5h-5zM734 331h5v5h-5zM704 336h5v5h-5zM734 336h5v5h-5zM864 336h5v5h-5zM674 346h5v5h-5zM694 346h5v5h-5zM764 346h5v5h-5zM774 346h5v5h-5zM674 356h5v5h-5zM699 356h5v5h-5zM704 356h5v5h-5zM799 356h5v5h-5zM679 381h5v5h-5zM769 381h5v5h-5zM859 381h5v5h-5zM734 386h5v5h-5zM734 391h5v5h-5zM864 391h5v5h-5zM674 441h5v5h-5zM694 441h5v5h-5zM719 441h5v5h-5zM784 441h5v5h-5zM809 441h5v5h-5zM814 441h5v5h-5zM869 441h5v5h-5zM824 446h5v5h-5zM674 451h5v5h-5zM699 451h5v5h-5zM704 451h5v5h-5zM739 451h5v5h-5zM744 451h5v5h-5zM769 451h5v5h-5zM784 451h5v5h-5zM799 451h5v5h-5zM849 451h5v5h-5zM869 451h5v5h-5zM689 536h5v5h-5zM694 536h5v5h-5zM674 546h5v5h-5zM679 546h5v5h-5zM689 546h5v5h-5zM694 546h5v5h-5z"/>
<path fill="#f8f8f8" d="M222 315h5v5h-5zM207 325h5v5h-5zM247 345h5v5h-5zM207 350h5v5h-5zM232 365h5v5h-5zM247 370h5v5h-5zM232 375h5v5h-5zM247 420h5v5h-5zM177 440h5v5h-5zM207 470h5v5h-5zM222 485h5v5h-5zM207 500h5v5h-5zM222 505h5v5h-5zM192 515h5v5h-5zM207 515h5v5h-5zM207 540h5v5h-5zM237 545h5v5h-5zM769 336h5v5h-5zM704 346h5v5h-5zM684 381h5v5h-5zM799 381h5v5h-5zM804 381h5v5h-5zM704 441h5v5h-5zM759 441h5v5h-5zM759 451h5v5h-5zM864 451h5v5h-5zM919 451h5v5h-5z"/>
<path fill="#888888" d="M227 315h5v5h-5zM227 330h5v5h-5zM242 330h5v5h-5zM222 350h5v5h-5zM172 385h5v5h-5zM187 410h5v5h-5zM237 445h5v5h-5zM277 445h5v5h-5zM182 465h5v5h-5zM197 500h5v5h-5zM227 505h5v5h-5zM227 520h5v5h-5zM242 520h5v5h-5zM192 540h5v5h-5zM232 540h5v5h-5zM242 540h5v5h-5zM674 331h5v5h-5zM714 331h5v5h-5zM789 331h5v5h-5zM799 331h5v5h-5zM834 331h5v5h-5zM844 331h5v5h-5zM874 331h5v5h-5zM884 331h5v5h-5zM674 336h5v5h-5zM714 336h5v5h-5zM874 336h5v5h-5zM699 351h5v5h-5zM719 351h5v5h-5zM794 351h5v5h-5zM674 391h5v5h-5zM714 391h5v5h-5zM794 391h5v5h-5zM804 391h5v5h-5zM874 391h5v5h-5zM699 446h5v5h-5zM714 446h5v5h-5zM794 446h5v5h-5zM914 446h5v5h-5zM919 446h5v5h-5z"/>
<path fill="#b0b0b0" d="M242 315h5v5h-5zM187 365h5v5h-5zM262 390h5v5h-5zM192 405h5v5h-5zM222 405h5v5h-5zM192 410h5v5h-5zM202 410h5v5h-5zM242 430h5v5h-5zM207 445h5v5h-5zM172 450h5v5h-5zM252 450h5v5h-5zM187 460h5v5h-5zM267 460h5v5h-5zM207 465h5v5h-5zM242 505h5v5h-5zM182 520h5v5h-5zM694 311h5v5h-5zM714 311h5v5h-5zM794 311h5v5h-5zM799 311h5v5h-5zM839 311h5v5h-5zM854 311h5v5h-5zM764 316h5v5h-5zM789 316h5v5h-5zM794 316h5v5h-5zM904 316h5v5h-5zM914 316h5v5h-5zM924 316h5v5h-5zM784 331h5v5h-5zM834 386h5v5h-5zM694 391h5v5h-5zM859 391h5v5h-5zM879 391h5v5h-5zM889 391h5v5h-5zM894 391h5v5h-5zM914 441h5v5h-5zM924 441h5v5h-5zM814 446h5v5h-5zM889 451h5v5h-5z"/>
<path fill="#e8e8e8" d="M247 315h5v5h-5zM172 325h5v5h-5zM192 325h5v5h-5zM202 325h5v5h-5zM257 335h5v5h-5zM192 345h5v5h-5zM192 355h5v5h-5zM222 365h5v5h-5zM237 365h5v5h-5zM192 375h5v5h-5zM202 375h5v5h-5zM237 375h5v5h-5zM242 375h5v5h-5zM247 385h5v5h-5zM237 390h5v5h-5zM177 420h5v5h-5zM192 420h5v5h-5zM207 420h5v5h-5zM207 440h5v5h-5zM177 460h5v5h-5zM222 460h5v5h-5zM257 460h5v5h-5zM277 460h5v5h-5zM197 470h5v5h-5zM232 470h5v5h-5zM257 470h5v5h-5zM262 470h5v5h-5zM272 470h5v5h-5zM247 485h5v5h-5zM247 505h5v5h-5zM187 515h5v5h-5zM197 515h5v5h-5zM247 525h5v5h-5zM262 535h5v5h-5zM679 316h5v5h-5zM819 316h5v5h-5zM889 316h5v5h-5zM684 326h5v5h-5zM774 326h5v5h-5zM804 326h5v5h-5zM709 336h5v5h-5zM809 336h5v5h-5zM814 336h5v5h-5zM684 346h5v5h-5zM689 346h5v5h-5zM734 346h5v5h-5zM769 346h5v5h-5zM794 346h5v5h-5zM689 356h5v5h-5zM694 356h5v5h-5zM719 356h5v5h-5zM739 356h5v5h-5zM744 356h5v5h-5zM769 356h5v5h-5zM774 356h5v5h-5zM794 356h5v5h-5zM729 386h5v5h-5zM704 391h5v5h-5zM769 391h5v5h-5zM809 391h5v5h-5zM814 391h5v5h-5zM684 441h5v5h-5zM689 441h5v5h-5zM729 441h5v5h-5zM734 441h5v5h-5zM744 441h5v5h-5zM774 441h5v5h-5zM794 441h5v5h-5zM889 441h5v5h-5zM894 441h5v5h-5zM854 446h5v5h-5zM689 451h5v5h-5zM694 451h5v5h-5zM719 451h5v5h-5zM729 451h5v5h-5zM734 451h5v5h-5zM774 451h5v5h-5zM794 451h5v5h-5zM809 451h5v5h-5zM814 451h5v5h-5zM834 451h5v5h-5zM839 451h5v5h-5zM894 451h5v5h-5zM904 451h5v5h-5zM679 536h5v5h-5z"/>
<path fill="#d8d8d8" d="M187 325h5v5h-5zM197 325h5v5h-5zM257 330h5v5h-5zM207 335h5v5h-5zM182 345h5v5h-5zM177 350h5v5h-5zM192 365h5v5h-5zM207 365h5v5h-5zM197 375h5v5h-5zM222 385h5v5h-5zM232 385h5v5h-5zM257 390h5v5h-5zM232 410h5v5h-5zM227 415h5v5h-5zM247 415h5v5h-5zM187 420h5v5h-5zM197 420h5v5h-5zM202 420h5v5h-5zM252 420h5v5h-5zM207 425h5v5h-5zM192 430h5v5h-5zM197 430h5v5h-5zM182 450h5v5h-5zM187 450h5v5h-5zM217 450h5v5h-5zM222 450h5v5h-5zM252 470h5v5h-5zM217 480h5v5h-5zM232 480h5v5h-5zM207 505h5v5h-5zM182 535h5v5h-5zM257 535h5v5h-5zM177 540h5v5h-5zM257 540h5v5h-5zM192 545h5v5h-5zM222 545h5v5h-5zM232 545h5v5h-5zM247 545h5v5h-5zM724 306h5v5h-5zM729 306h5v5h-5zM744 306h5v5h-5zM904 306h5v5h-5zM774 311h5v5h-5zM784 311h5v5h-5zM819 311h5v5h-5zM889 311h5v5h-5zM839 316h5v5h-5zM844 316h5v5h-5zM769 326h5v5h-5zM769 331h5v5h-5zM839 331h5v5h-5zM694 336h5v5h-5zM759 336h5v5h-5zM784 336h5v5h-5zM824 336h5v5h-5zM834 336h5v5h-5zM859 336h5v5h-5zM869 336h5v5h-5zM879 336h5v5h-5zM889 336h5v5h-5zM894 336h5v5h-5zM699 346h5v5h-5zM739 346h5v5h-5zM704 351h5v5h-5zM709 351h5v5h-5zM749 351h5v5h-5zM684 356h5v5h-5zM784 356h5v5h-5zM709 381h5v5h-5zM839 386h5v5h-5zM849 386h5v5h-5zM869 391h5v5h-5zM674 396h5v5h-5zM689 396h5v5h-5zM714 396h5v5h-5zM744 396h5v5h-5zM819 396h5v5h-5zM874 396h5v5h-5zM699 441h5v5h-5zM864 441h5v5h-5zM704 446h5v5h-5zM709 446h5v5h-5zM869 446h5v5h-5zM904 446h5v5h-5zM684 451h5v5h-5zM909 451h5v5h-5zM699 536h5v5h-5zM684 546h5v5h-5z"/>
<path fill="#e0e0e0" d="M257 325h5v5h-5zM247 330h5v5h-5zM207 355h5v5h-5zM232 355h5v5h-5zM227 365h5v5h-5zM222 370h5v5h-5zM227 375h5v5h-5zM192 425h5v5h-5zM232 430h5v5h-5zM192 440h5v5h-5zM267 440h5v5h-5zM207 450h5v5h-5zM232 460h5v5h-5zM202 470h5v5h-5zM227 470h5v5h-5zM267 470h5v5h-5zM277 470h5v5h-5zM182 485h5v5h-5zM177 515h5v5h-5zM182 515h5v5h-5zM202 515h5v5h-5zM177 520h5v5h-5zM207 525h5v5h-5zM192 535h5v5h-5zM242 535h5v5h-5zM207 545h5v5h-5zM679 306h5v5h-5zM709 306h5v5h-5zM774 306h5v5h-5zM879 306h5v5h-5zM889 306h5v5h-5zM769 311h5v5h-5zM879 311h5v5h-5zM824 316h5v5h-5zM879 316h5v5h-5zM679 326h5v5h-5zM799 326h5v5h-5zM844 326h5v5h-5zM729 331h5v5h-5zM729 336h5v5h-5zM884 336h5v5h-5zM714 346h5v5h-5zM729 346h5v5h-5zM754 346h5v5h-5zM759 346h5v5h-5zM779 346h5v5h-5zM784 346h5v5h-5zM714 356h5v5h-5zM724 356h5v5h-5zM729 356h5v5h-5zM734 356h5v5h-5zM754 356h5v5h-5zM759 356h5v5h-5zM789 356h5v5h-5zM729 391h5v5h-5zM754 441h5v5h-5zM764 441h5v5h-5zM779 441h5v5h-5zM789 441h5v5h-5zM904 441h5v5h-5zM714 451h5v5h-5zM749 451h5v5h-5zM754 451h5v5h-5zM764 451h5v5h-5zM779 451h5v5h-5zM859 451h5v5h-5zM914 451h5v5h-5zM924 451h5v5h-5z"/>
<path fill="#787878" d="M202 330h5v5h-5zM187 350h5v5h-5zM227 350h5v5h-5zM197 390h5v5h-5zM197 405h5v5h-5zM227 410h5v5h-5zM237 465h5v5h-5zM187 485h5v5h-5zM202 485h5v5h-5zM899 311h5v5h-5zM759 331h5v5h-5zM764 331h5v5h-5zM794 331h5v5h-5zM819 336h5v5h-5zM834 446h5v5h-5z"/>
<path fill="#808080" d="M252 330h5v5h-5zM217 350h5v5h-5zM202 370h5v5h-5zM202 390h5v5h-5zM187 405h5v5h-5zM227 430h5v5h-5zM222 445h5v5h-5zM267 445h5v5h-5zM197 465h5v5h-5zM202 465h5v5h-5zM222 465h5v5h-5zM277 465h5v5h-5zM197 485h5v5h-5zM232 485h5v5h-5zM197 520h5v5h-5zM699 311h5v5h-5zM764 311h5v5h-5zM804 311h5v5h-5zM884 311h5v5h-5zM904 311h5v5h-5zM924 311h5v5h-5zM824 331h5v5h-5zM719 391h5v5h-5z"/>
<path fill="#585858" d="M187 370h5v5h-5zM187 465h5v5h-5z"/>
<path fill="#686868" d="M172 390h5v5h-5zM202 405h5v5h-5zM252 445h5v5h-5zM252 465h5v5h-5zM187 520h5v5h-5zM252 540h5v5h-5zM684 331h5v5h-5zM724 331h5v5h-5zM804 331h5v5h-5zM724 351h5v5h-5zM819 391h5v5h-5z"/>
<path fill="#606060" d="M252 390h5v5h-5zM187 540h5v5h-5zM719 331h5v5h-5zM819 331h5v5h-5zM754 351h5v5h-5zM779 351h5v5h-5zM779 446h5v5h-5zM859 446h5v5h-5zM924 446h5v5h-5zM699 541h5v5h-5z"/>
<path fill="#505050" d="M187 445h5v5h-5z"/>
<path fill="#007878" d="M859 286h5v5h-5zM734 291h5v5h-5zM734 296h5v5h-5zM809 296h5v5h-5zM814 296h5v5h-5zM864 296h5v5h-5z"/>
<path fill="#d0e8e8" d="M929 286h5v5h-5zM929 291h5v5h-5zM929 296h5v5h-5zM674 566h5v5h-5zM699 566h5v5h-5zM704 566h5v5h-5zM709 566h5v5h-5zM724 566h5v5h-5zM729 566h5v5h-5zM734 566h5v5h-5zM739 566h5v5h-5zM784 566h5v5h-5zM789 566h5v5h-5zM794 566h5v5h-5zM799 566h5v5h-5zM804 566h5v5h-5zM809 566h5v5h-5zM814 566h5v5h-5zM819 566h5v5h-5zM824 566h5v5h-5zM829 566h5v5h-5zM834 566h5v5h-5zM839 566h5v5h-5zM844 566h5v5h-5zM849 566h5v5h-5zM854 566h5v5h-5zM859 566h5v5h-5zM864 566h5v5h-5zM869 566h5v5h-5zM874 566h5v5h-5zM879 566h5v5h-5zM884 566h5v5h-5zM889 566h5v5h-5zM904 566h5v5h-5zM909 566h5v5h-5zM914 566h5v5h-5zM919 566h5v5h-5zM924 566h5v5h-5z"/>
<path fill="#e0f0e0" d="M674 366h5v5h-5zM719 366h5v5h-5zM784 366h5v5h-5zM839 366h5v5h-5zM874 366h5v5h-5zM679 401h5v5h-5zM709 401h5v5h-5zM749 401h5v5h-5zM789 401h5v5h-5zM719 421h5v5h-5zM704 426h5v5h-5zM674 431h5v5h-5zM704 431h5v5h-5zM674 461h5v5h-5zM759 461h5v5h-5zM809 461h5v5h-5zM814 461h5v5h-5zM904 461h5v5h-5zM784 481h5v5h-5zM889 486h5v5h-5zM679 496h5v5h-5zM709 496h5v5h-5zM774 496h5v5h-5zM879 496h5v5h-5zM889 496h5v5h-5zM769 501h5v5h-5zM879 501h5v5h-5zM824 506h5v5h-5zM879 506h5v5h-5zM699 516h5v5h-5zM879 521h5v5h-5zM674 526h5v5h-5zM719 526h5v5h-5zM769 526h5v5h-5zM824 526h5v5h-5zM839 526h5v5h-5zM844 526h5v5h-5zM849 526h5v5h-5zM874 526h5v5h-5zM674 556h5v5h-5zM719 556h5v5h-5zM784 556h5v5h-5zM839 556h5v5h-5zM874 556h5v5h-5z"/>
<path fill="#c8e8c8" d="M679 366h5v5h-5zM749 366h5v5h-5zM834 366h5v5h-5zM879 366h5v5h-5zM679 371h5v5h-5zM899 376h5v5h-5zM759 411h5v5h-5zM714 431h5v5h-5zM754 461h5v5h-5zM679 481h5v5h-5zM889 481h5v5h-5zM679 501h5v5h-5zM864 506h5v5h-5zM749 526h5v5h-5zM794 526h5v5h-5zM834 526h5v5h-5zM679 556h5v5h-5zM749 556h5v5h-5zM834 556h5v5h-5zM879 556h5v5h-5zM679 561h5v5h-5z"/>
<path fill="#b8e0b8" d="M684 366h5v5h-5zM714 366h5v5h-5zM859 366h5v5h-5zM784 371h5v5h-5zM774 406h5v5h-5zM674 426h5v5h-5zM724 431h5v5h-5zM764 461h5v5h-5zM779 461h5v5h-5zM689 481h5v5h-5zM714 481h5v5h-5zM919 481h5v5h-5zM714 486h5v5h-5zM784 486h5v5h-5zM869 501h5v5h-5zM674 521h5v5h-5zM874 521h5v5h-5zM684 526h5v5h-5zM859 526h5v5h-5zM684 556h5v5h-5zM714 556h5v5h-5zM859 556h5v5h-5zM784 561h5v5h-5z"/>
<path fill="#d0e8d0" d="M689 366h5v5h-5zM789 366h5v5h-5zM799 366h5v5h-5zM829 366h5v5h-5zM894 366h5v5h-5zM734 406h5v5h-5zM674 411h5v5h-5zM784 411h5v5h-5zM709 421h5v5h-5zM749 421h5v5h-5zM789 421h5v5h-5zM784 426h5v5h-5zM719 431h5v5h-5zM729 431h5v5h-5zM734 431h5v5h-5zM739 431h5v5h-5zM744 431h5v5h-5zM759 431h5v5h-5zM784 431h5v5h-5zM684 461h5v5h-5zM729 461h5v5h-5zM734 461h5v5h-5zM744 461h5v5h-5zM864 461h5v5h-5zM889 461h5v5h-5zM679 466h5v5h-5zM704 466h5v5h-5zM829 466h5v5h-5zM864 466h5v5h-5zM674 481h5v5h-5zM734 481h5v5h-5zM824 481h5v5h-5zM874 481h5v5h-5zM759 501h5v5h-5zM674 506h5v5h-5zM704 506h5v5h-5zM719 506h5v5h-5zM769 506h5v5h-5zM799 506h5v5h-5zM849 506h5v5h-5zM854 506h5v5h-5zM874 506h5v5h-5zM709 516h5v5h-5zM774 516h5v5h-5zM769 521h5v5h-5zM759 526h5v5h-5zM764 526h5v5h-5zM829 526h5v5h-5zM894 526h5v5h-5zM904 526h5v5h-5zM924 526h5v5h-5zM689 556h5v5h-5zM789 556h5v5h-5zM799 556h5v5h-5zM829 556h5v5h-5zM894 556h5v5h-5z"/>
<path fill="#d8e8d8" d="M694 366h5v5h-5zM919 366h5v5h-5zM744 406h5v5h-5zM689 411h5v5h-5zM704 411h5v5h-5zM769 411h5v5h-5zM689 431h5v5h-5zM694 431h5v5h-5zM769 431h5v5h-5zM774 431h5v5h-5zM689 461h5v5h-5zM894 461h5v5h-5zM719 481h5v5h-5zM824 486h5v5h-5zM774 501h5v5h-5zM784 501h5v5h-5zM889 501h5v5h-5zM839 506h5v5h-5zM844 506h5v5h-5zM889 516h5v5h-5zM889 521h5v5h-5zM694 526h5v5h-5zM734 526h5v5h-5zM744 526h5v5h-5zM694 556h5v5h-5zM919 556h5v5h-5z"/>
<path fill="#98c898" d="M699 366h5v5h-5zM904 366h5v5h-5zM864 371h5v5h-5zM684 411h5v5h-5zM779 431h5v5h-5zM859 461h5v5h-5zM784 466h5v5h-5zM829 486h5v5h-5zM904 486h5v5h-5zM689 506h5v5h-5zM724 506h5v5h-5zM779 506h5v5h-5zM794 521h5v5h-5zM799 521h5v5h-5zM864 521h5v5h-5zM689 526h5v5h-5zM714 526h5v5h-5zM699 556h5v5h-5zM904 556h5v5h-5zM864 561h5v5h-5z"/>
<path fill="#b8d8b8" d="M709 366h5v5h-5zM764 366h5v5h-5zM924 366h5v5h-5zM674 371h5v5h-5zM769 371h5v5h-5zM874 371h5v5h-5zM744 411h5v5h-5zM789 411h5v5h-5zM794 411h5v5h-5zM699 461h5v5h-5zM709 461h5v5h-5zM724 461h5v5h-5zM674 466h5v5h-5zM739 466h5v5h-5zM709 481h5v5h-5zM749 481h5v5h-5zM834 481h5v5h-5zM909 481h5v5h-5zM734 486h5v5h-5zM759 486h5v5h-5zM894 486h5v5h-5zM909 486h5v5h-5zM849 501h5v5h-5zM699 506h5v5h-5zM749 506h5v5h-5zM829 506h5v5h-5zM834 506h5v5h-5zM869 521h5v5h-5zM804 526h5v5h-5zM884 526h5v5h-5zM709 556h5v5h-5zM764 556h5v5h-5zM924 556h5v5h-5zM674 561h5v5h-5zM769 561h5v5h-5zM874 561h5v5h-5z"/>
<path fill="#78c078" d="M724 366h5v5h-5zM789 371h5v5h-5zM739 406h5v5h-5zM754 406h5v5h-5zM699 426h5v5h-5zM724 466h5v5h-5zM899 501h5v5h-5zM899 526h5v5h-5zM724 556h5v5h-5zM789 561h5v5h-5z"/>
<path fill="#a0d0a0" d="M729 366h5v5h-5zM744 366h5v5h-5zM694 371h5v5h-5zM744 371h5v5h-5zM779 371h5v5h-5zM909 371h5v5h-5zM719 406h5v5h-5zM764 406h5v5h-5zM789 406h5v5h-5zM794 406h5v5h-5zM799 406h5v5h-5zM724 411h5v5h-5zM774 426h5v5h-5zM789 426h5v5h-5zM799 426h5v5h-5zM764 431h5v5h-5zM769 461h5v5h-5zM799 461h5v5h-5zM909 461h5v5h-5zM699 466h5v5h-5zM729 466h5v5h-5zM734 466h5v5h-5zM799 466h5v5h-5zM839 466h5v5h-5zM894 466h5v5h-5zM684 481h5v5h-5zM744 481h5v5h-5zM764 481h5v5h-5zM844 481h5v5h-5zM859 481h5v5h-5zM924 481h5v5h-5zM699 486h5v5h-5zM779 486h5v5h-5zM744 501h5v5h-5zM749 501h5v5h-5zM754 501h5v5h-5zM909 501h5v5h-5zM914 501h5v5h-5zM919 501h5v5h-5zM684 506h5v5h-5zM694 521h5v5h-5zM714 521h5v5h-5zM744 521h5v5h-5zM854 521h5v5h-5zM729 556h5v5h-5zM744 556h5v5h-5zM694 561h5v5h-5zM744 561h5v5h-5zM779 561h5v5h-5zM909 561h5v5h-5z"/>
<path fill="#d8f0d8" d="M734 366h5v5h-5zM794 366h5v5h-5zM849 366h5v5h-5zM854 366h5v5h-5zM864 366h5v5h-5zM879 371h5v5h-5zM889 371h5v5h-5zM799 401h5v5h-5zM784 406h5v5h-5zM679 421h5v5h-5zM699 431h5v5h-5zM799 431h5v5h-5zM694 461h5v5h-5zM719 461h5v5h-5zM774 461h5v5h-5zM784 461h5v5h-5zM869 461h5v5h-5zM869 466h5v5h-5zM759 481h5v5h-5zM879 481h5v5h-5zM679 486h5v5h-5zM879 486h5v5h-5zM689 491h5v5h-5zM899 491h5v5h-5zM724 496h5v5h-5zM729 496h5v5h-5zM744 496h5v5h-5zM904 496h5v5h-5zM819 501h5v5h-5zM679 516h5v5h-5zM879 516h5v5h-5zM704 526h5v5h-5zM729 526h5v5h-5zM784 526h5v5h-5zM864 526h5v5h-5zM909 526h5v5h-5zM734 556h5v5h-5zM794 556h5v5h-5zM849 556h5v5h-5zM854 556h5v5h-5zM864 556h5v5h-5zM879 561h5v5h-5zM889 561h5v5h-5z"/>
<path fill="#b0d8b0" d="M754 366h5v5h-5zM779 366h5v5h-5zM844 366h5v5h-5zM899 366h5v5h-5zM719 371h5v5h-5zM734 371h5v5h-5zM799 371h5v5h-5zM844 371h5v5h-5zM894 371h5v5h-5zM714 376h5v5h-5zM779 376h5v5h-5zM689 406h5v5h-5zM719 411h5v5h-5zM739 411h5v5h-5zM684 431h5v5h-5zM839 461h5v5h-5zM854 461h5v5h-5zM814 466h5v5h-5zM849 466h5v5h-5zM754 481h5v5h-5zM779 481h5v5h-5zM804 481h5v5h-5zM884 481h5v5h-5zM694 486h5v5h-5zM744 486h5v5h-5zM864 486h5v5h-5zM694 501h5v5h-5zM714 501h5v5h-5zM794 501h5v5h-5zM799 501h5v5h-5zM839 501h5v5h-5zM854 501h5v5h-5zM764 506h5v5h-5zM789 506h5v5h-5zM794 506h5v5h-5zM904 506h5v5h-5zM914 506h5v5h-5zM924 506h5v5h-5zM719 521h5v5h-5zM734 521h5v5h-5zM724 526h5v5h-5zM754 556h5v5h-5zM779 556h5v5h-5zM844 556h5v5h-5zM899 556h5v5h-5zM719 561h5v5h-5zM734 561h5v5h-5zM799 561h5v5h-5zM844 561h5v5h-5zM894 561h5v5h-5z"/>
<path fill="#e8f0e8" d="M759 366h5v5h-5zM824 366h5v5h-5zM709 371h5v5h-5zM869 371h5v5h-5zM679 411h5v5h-5zM724 421h5v5h-5zM709 466h5v5h-5zM789 466h5v5h-5zM679 506h5v5h-5zM894 516h5v5h-5zM704 521h5v5h-5zM774 521h5v5h-5zM799 526h5v5h-5zM854 526h5v5h-5zM759 556h5v5h-5zM824 556h5v5h-5zM709 561h5v5h-5zM869 561h5v5h-5z"/>
<path fill="#ffffff" d="M769 366h5v5h-5zM719 376h5v5h-5zM674 421h5v5h-5zM674 516h5v5h-5zM874 516h5v5h-5zM769 556h5v5h-5z"/>
<path fill="#c0e0c0" d="M774 366h5v5h-5zM804 366h5v5h-5zM884 366h5v5h-5zM714 371h5v5h-5zM674 406h5v5h-5zM679 406h5v5h-5zM694 406h5v5h-5zM709 406h5v5h-5zM749 406h5v5h-5zM694 411h5v5h-5zM734 411h5v5h-5zM774 411h5v5h-5zM679 426h5v5h-5zM729 426h5v5h-5zM744 426h5v5h-5zM754 431h5v5h-5zM679 461h5v5h-5zM739 461h5v5h-5zM919 461h5v5h-5zM904 466h5v5h-5zM694 481h5v5h-5zM789 481h5v5h-5zM799 481h5v5h-5zM864 481h5v5h-5zM869 481h5v5h-5zM674 486h5v5h-5zM719 486h5v5h-5zM769 486h5v5h-5zM799 486h5v5h-5zM839 486h5v5h-5zM849 486h5v5h-5zM854 486h5v5h-5zM874 486h5v5h-5zM714 491h5v5h-5zM779 491h5v5h-5zM674 501h5v5h-5zM709 501h5v5h-5zM719 501h5v5h-5zM734 501h5v5h-5zM874 501h5v5h-5zM694 506h5v5h-5zM759 506h5v5h-5zM894 506h5v5h-5zM784 521h5v5h-5zM754 526h5v5h-5zM789 526h5v5h-5zM914 526h5v5h-5zM919 526h5v5h-5zM774 556h5v5h-5zM804 556h5v5h-5zM884 556h5v5h-5zM714 561h5v5h-5z"/>
<path fill="#c8e0c8" d="M869 366h5v5h-5zM889 366h5v5h-5zM909 366h5v5h-5zM914 366h5v5h-5zM704 371h5v5h-5zM819 371h5v5h-5zM824 371h5v5h-5zM689 376h5v5h-5zM729 406h5v5h-5zM699 411h5v5h-5zM714 411h5v5h-5zM729 411h5v5h-5zM799 411h5v5h-5zM799 421h5v5h-5zM709 426h5v5h-5zM734 426h5v5h-5zM749 426h5v5h-5zM789 431h5v5h-5zM794 431h5v5h-5zM789 461h5v5h-5zM794 461h5v5h-5zM804 466h5v5h-5zM884 466h5v5h-5zM889 471h5v5h-5zM774 481h5v5h-5zM794 481h5v5h-5zM829 481h5v5h-5zM839 481h5v5h-5zM849 481h5v5h-5zM854 481h5v5h-5zM894 481h5v5h-5zM914 481h5v5h-5zM704 486h5v5h-5zM819 486h5v5h-5zM844 486h5v5h-5zM824 501h5v5h-5zM894 501h5v5h-5zM729 506h5v5h-5zM734 506h5v5h-5zM744 506h5v5h-5zM784 506h5v5h-5zM909 506h5v5h-5zM724 516h5v5h-5zM729 516h5v5h-5zM744 516h5v5h-5zM904 516h5v5h-5zM679 521h5v5h-5zM709 521h5v5h-5zM759 521h5v5h-5zM819 521h5v5h-5zM824 521h5v5h-5zM894 521h5v5h-5zM699 526h5v5h-5zM869 556h5v5h-5zM889 556h5v5h-5zM909 556h5v5h-5zM914 556h5v5h-5zM704 561h5v5h-5zM819 561h5v5h-5zM824 561h5v5h-5zM689 566h5v5h-5z"/>
<path fill="#78b878" d="M684 371h5v5h-5zM834 371h5v5h-5zM904 371h5v5h-5zM859 486h5v5h-5zM684 521h5v5h-5zM834 521h5v5h-5zM904 521h5v5h-5zM684 561h5v5h-5zM834 561h5v5h-5zM904 561h5v5h-5z"/>
<path fill="#90c890" d="M689 371h5v5h-5zM699 371h5v5h-5zM729 371h5v5h-5zM749 371h5v5h-5zM829 371h5v5h-5zM714 406h5v5h-5zM714 426h5v5h-5zM719 426h5v5h-5zM794 426h5v5h-5zM924 461h5v5h-5zM754 466h5v5h-5zM769 466h5v5h-5zM794 466h5v5h-5zM889 466h5v5h-5zM909 466h5v5h-5zM914 466h5v5h-5zM919 466h5v5h-5zM899 481h5v5h-5zM684 486h5v5h-5zM689 486h5v5h-5zM919 486h5v5h-5zM684 501h5v5h-5zM729 501h5v5h-5zM834 501h5v5h-5zM844 501h5v5h-5zM689 521h5v5h-5zM729 521h5v5h-5zM749 521h5v5h-5zM754 521h5v5h-5zM829 521h5v5h-5zM909 521h5v5h-5zM689 561h5v5h-5zM699 561h5v5h-5zM729 561h5v5h-5zM749 561h5v5h-5zM829 561h5v5h-5z"/>
<path fill="#68b068" d="M724 371h5v5h-5zM779 426h5v5h-5zM859 466h5v5h-5zM924 466h5v5h-5zM899 486h5v5h-5zM724 521h5v5h-5zM804 521h5v5h-5zM884 521h5v5h-5zM724 561h5v5h-5z"/>
<path fill="#88c088" d="M754 371h5v5h-5zM794 371h5v5h-5zM914 371h5v5h-5zM764 411h5v5h-5zM779 411h5v5h-5zM714 461h5v5h-5zM714 466h5v5h-5zM834 466h5v5h-5zM699 481h5v5h-5zM779 521h5v5h-5zM789 521h5v5h-5zM844 521h5v5h-5zM919 521h5v5h-5zM754 561h5v5h-5zM794 561h5v5h-5zM914 561h5v5h-5z"/>
<path fill="#a8d8a8" d="M759 371h5v5h-5zM839 371h5v5h-5zM849 371h5v5h-5zM689 426h5v5h-5zM694 426h5v5h-5zM689 466h5v5h-5zM694 466h5v5h-5zM809 466h5v5h-5zM729 486h5v5h-5zM714 506h5v5h-5zM754 506h5v5h-5zM759 561h5v5h-5zM839 561h5v5h-5zM849 561h5v5h-5z"/>
<path fill="#80c080" d="M764 371h5v5h-5zM924 371h5v5h-5zM724 406h5v5h-5zM779 406h5v5h-5zM684 426h5v5h-5zM764 426h5v5h-5zM759 466h5v5h-5zM724 486h5v5h-5zM699 501h5v5h-5zM764 501h5v5h-5zM804 501h5v5h-5zM884 501h5v5h-5zM904 501h5v5h-5zM924 501h5v5h-5zM699 521h5v5h-5zM764 561h5v5h-5zM924 561h5v5h-5z"/>
<path fill="#60b060" d="M804 371h5v5h-5zM859 371h5v5h-5zM884 371h5v5h-5zM899 371h5v5h-5zM739 426h5v5h-5zM754 426h5v5h-5zM684 466h5v5h-5zM779 466h5v5h-5zM859 521h5v5h-5zM899 521h5v5h-5zM804 561h5v5h-5zM859 561h5v5h-5zM884 561h5v5h-5zM899 561h5v5h-5z"/>
<path fill="#a8d0a8" d="M854 371h5v5h-5zM769 406h5v5h-5zM754 411h5v5h-5zM769 426h5v5h-5zM834 461h5v5h-5zM849 461h5v5h-5zM744 466h5v5h-5zM764 466h5v5h-5zM774 466h5v5h-5zM749 486h5v5h-5zM689 501h5v5h-5zM829 501h5v5h-5zM864 501h5v5h-5zM859 506h5v5h-5zM919 506h5v5h-5zM839 521h5v5h-5zM849 521h5v5h-5zM854 561h5v5h-5z"/>
<path fill="#70b870" d="M919 371h5v5h-5zM724 481h5v5h-5zM804 486h5v5h-5zM884 486h5v5h-5zM724 501h5v5h-5zM859 501h5v5h-5zM899 506h5v5h-5zM919 561h5v5h-5z"/>
<path fill="#e8f8e8" d="M719 401h5v5h-5zM784 401h5v5h-5zM704 406h5v5h-5zM784 421h5v5h-5zM819 506h5v5h-5zM889 506h5v5h-5zM879 526h5v5h-5z"/>
<path fill="#f0f8f0" d="M724 401h5v5h-5zM824 466h5v5h-5zM854 466h5v5h-5zM679 476h5v5h-5zM709 476h5v5h-5zM724 476h5v5h-5zM729 476h5v5h-5zM744 476h5v5h-5zM754 476h5v5h-5zM774 476h5v5h-5zM779 476h5v5h-5zM879 476h5v5h-5zM904 476h5v5h-5zM769 481h5v5h-5zM869 486h5v5h-5zM754 496h5v5h-5zM779 496h5v5h-5zM894 496h5v5h-5zM754 516h5v5h-5zM779 516h5v5h-5z"/>
<path fill="#f8fff8" d="M729 401h5v5h-5zM734 401h5v5h-5zM729 421h5v5h-5zM734 421h5v5h-5zM679 526h5v5h-5zM869 526h5v5h-5z"/>
<path fill="#98d098" d="M684 406h5v5h-5zM759 406h5v5h-5zM719 466h5v5h-5zM729 481h5v5h-5zM754 486h5v5h-5zM764 486h5v5h-5zM794 486h5v5h-5zM924 486h5v5h-5zM779 501h5v5h-5zM789 501h5v5h-5zM804 506h5v5h-5zM884 506h5v5h-5z"/>
<path fill="#88c888" d="M699 406h5v5h-5zM759 426h5v5h-5zM749 461h5v5h-5zM914 461h5v5h-5zM749 466h5v5h-5zM904 481h5v5h-5zM789 486h5v5h-5zM834 486h5v5h-5zM914 486h5v5h-5zM914 521h5v5h-5zM779 526h5v5h-5z"/>
<path fill="#68b868" d="M724 426h5v5h-5zM764 521h5v5h-5zM924 521h5v5h-5z"/>
<path fill="#f0fff0" d="M679 431h5v5h-5zM704 461h5v5h-5zM714 476h5v5h-5zM889 476h5v5h-5zM709 486h5v5h-5zM699 496h5v5h-5zM714 496h5v5h-5zM704 501h5v5h-5zM869 506h5v5h-5zM714 516h5v5h-5zM889 526h5v5h-5z"/>
<path fill="#e0f0f0" d="M679 566h5v5h-5z"/>
<path fill="#f8ffff" d="M694 566h5v5h-5zM929 566h5v5h-5z"/>
<path fill="#80c098" d="M714 566h5v5h-5z"/>
<path fill="#c8e0e0" d="M719 566h5v5h-5zM774 566h5v5h-5z"/>
<path fill="#e8f8f8" d="M744 566h5v5h-5z"/>
<path fill="#d8e8e8" d="M769 566h5v5h-5z"/>
<path fill="#78c098" d="M779 566h5v5h-5z"/>
<path fill="#c8e8e0" d="M894 566h5v5h-5z"/>
<path fill="#98c8b0" d="M899 566h5v5h-5z"/>
<rect x="169" y="300" width="117" height="5" fill="#3a9a9a"/>
<rect x="169" y="287" width="3" height="13" fill="#fff" fill-opacity="0.15"/>
<rect x="672" y="301" width="257" height="5" fill="#64b0b0"/>
<rect x="929" y="288" width="5" height="18" fill="#d2e8e8"/>
<rect x="407" y="50" width="3" height="5" fill="#475062"/>
<rect x="410" y="50" width="5" height="5" fill="#4d505d"/>
<rect x="415" y="50" width="5" height="5" fill="#51545f"/>
<rect x="420" y="50" width="5" height="5" fill="#7d8096"/>
<rect x="425" y="50" width="5" height="5" fill="#6e717f"/>
<rect x="430" y="50" width="5" height="5" fill="#4a4d59"/>
<rect x="435" y="50" width="5" height="5" fill="#51545f"/>
<rect x="440" y="50" width="5" height="5" fill="#51545f"/>
<rect x="445" y="50" width="5" height="5" fill="#6e717f"/>
<rect x="450" y="50" width="5" height="5" fill="#51545f"/>
<rect x="455" y="50" width="5" height="5" fill="#595d69"/>
<rect x="460" y="50" width="5" height="5" fill="#46506a"/>
<rect x="465" y="50" width="5" height="5" fill="#4a4d59"/>
<rect x="470" y="50" width="5" height="5" fill="#51545f"/>
<rect x="475" y="50" width="5" height="5" fill="#4a4d59"/>
<rect x="407" y="55" width="3" height="5" fill="#7f8488"/>
<rect x="410" y="55" width="5" height="5" fill="#6c6f85"/>
<rect x="415" y="55" width="5" height="5" fill="#9aa5a5"/>
<rect x="420" y="55" width="5" height="5" fill="#7d8096"/>
<rect x="425" y="55" width="5" height="5" fill="#aaa9a3"/>
<rect x="430" y="55" width="5" height="5" fill="#6a6e88"/>
<rect x="435" y="55" width="5" height="5" fill="#93a0a0"/>
<rect x="440" y="55" width="5" height="5" fill="#80707c"/>
<rect x="445" y="55" width="5" height="5" fill="#7c82a0"/>
<rect x="450" y="55" width="5" height="5" fill="#959590"/>
<rect x="455" y="55" width="5" height="5" fill="#70737f"/>
<rect x="460" y="55" width="5" height="5" fill="#7c868a"/>
<rect x="465" y="55" width="5" height="5" fill="#9ab5c0"/>
<rect x="470" y="55" width="5" height="5" fill="#80707c"/>
<rect x="475" y="55" width="5" height="5" fill="#6e717f"/>
<rect x="407" y="60" width="3" height="5" fill="#46506a"/>
<rect x="410" y="60" width="5" height="5" fill="#4d505d"/>
<rect x="415" y="60" width="5" height="5" fill="#51545f"/>
<rect x="420" y="60" width="5" height="5" fill="#4d505d"/>
<rect x="425" y="60" width="5" height="5" fill="#70737f"/>
<rect x="430" y="60" width="5" height="5" fill="#4a4d59"/>
<rect x="435" y="60" width="5" height="5" fill="#51545f"/>
<rect x="440" y="60" width="5" height="5" fill="#4a4d59"/>
<rect x="445" y="60" width="5" height="5" fill="#435068"/>
<rect x="450" y="60" width="5" height="5" fill="#595d69"/>
<rect x="455" y="60" width="5" height="5" fill="#46546c"/>
<rect x="460" y="60" width="5" height="5" fill="#6e717f"/>
<rect x="465" y="60" width="5" height="5" fill="#4a4d59"/>
<rect x="470" y="60" width="5" height="5" fill="#4a4d59"/>
<rect x="475" y="60" width="5" height="5" fill="#4a4d59"/>
</svg>
</div>
<svg class="abs" style="left:655px;top:16px;z-index:9" width="14" height="22" viewBox="0 0 14 22"><path d="M1.500 2V18.500L5 15L7.500 20.500L10 19.500L7.700 14H13Z" fill="#fff" stroke="#000" stroke-width="1" stroke-linejoin="miter"/></svg>
</body></html>
